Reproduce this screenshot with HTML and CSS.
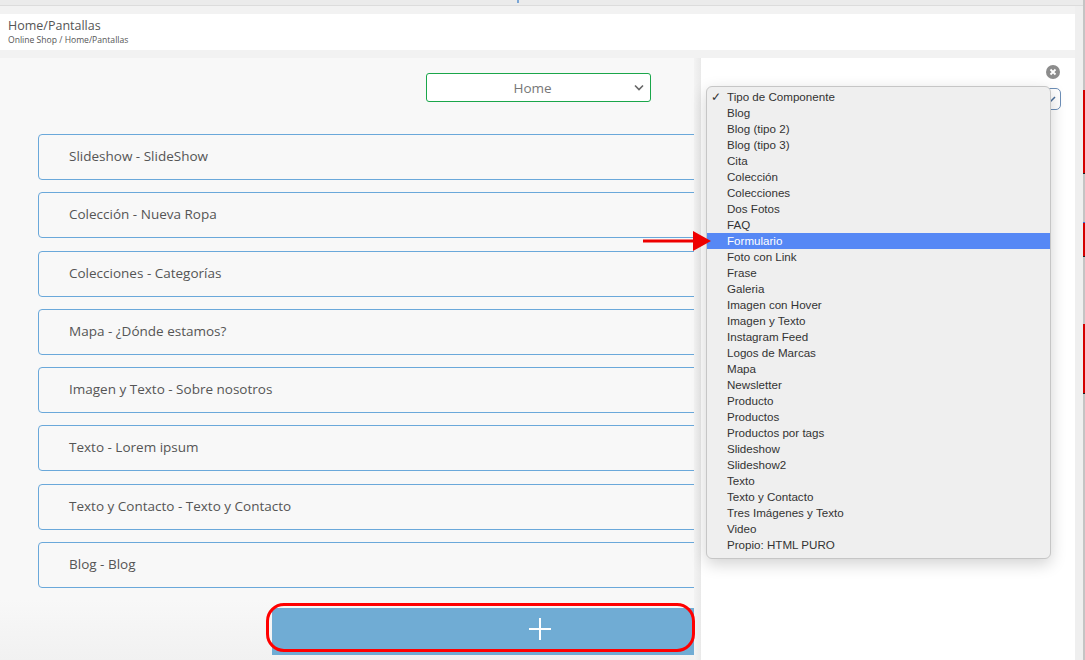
FILE: index.html
```html
<!DOCTYPE html>
<html lang="es">
<head>
    <meta charset="UTF-8">
    <meta name="viewport" content="width=device-width, initial-scale=1.0">
    <title>Home/Pantallas</title>
    <link rel="stylesheet" href="styles.css">
</head>
<body>

    <div class="topbar">
        <span class="topbar-mark"></span>
    </div>

    <div class="page-header">
        <div class="page-title">Home/Pantallas</div>
        <div class="breadcrumb">Online Shop / Home/Pantallas</div>
    </div>

    <div class="main">
        <div class="left-panel">
            <div class="screen-row">
                <div class="screen-select">
                    <span>Home</span>
                    <svg class="chevron" width="10" height="7" viewBox="0 0 10 7"><path d="M1 1.5 L5 5.5 L9 1.5" fill="none" stroke="#666" stroke-width="1.6"/></svg>
                </div>
            </div>

            <div class="component-list">
                <div class="component">Slideshow - SlideShow</div>
                <div class="component">Colección - Nueva Ropa</div>
                <div class="component">Colecciones - Categorías</div>
                <div class="component">Mapa - ¿Dónde estamos?</div>
                <div class="component">Imagen y Texto - Sobre nosotros</div>
                <div class="component">Texto - Lorem ipsum</div>
                <div class="component">Texto y Contacto - Texto y Contacto</div>
                <div class="component">Blog - Blog</div>
            </div>

            <div class="add-wrap">
                <div class="add-clip">
                    <button class="add-button">
                        <svg width="24" height="24" viewBox="0 0 24 24"><path d="M12 1 V23 M1 12 H23" stroke="#fff" stroke-width="2"/></svg>
                    </button>
                </div>
                <div class="add-highlight"></div>
            </div>

            <svg class="red-arrow" width="75" height="24" viewBox="0 0 75 24">
                <rect x="3" y="9.5" width="54" height="3" fill="#ee0000"/>
                <polygon points="53,1 71,11 53,21" fill="#ee0000"/>
            </svg>
        </div>

        <div class="divider"></div>

        <div class="right-panel">
            <span class="close-icon">
                <svg width="14" height="14" viewBox="0 0 14 14"><circle cx="7" cy="7" r="7" fill="#8c8c8c"/><path d="M4.5 4.5 L9.5 9.5 M9.5 4.5 L4.5 9.5" stroke="#fff" stroke-width="1.8"/></svg>
            </span>
            <div class="type-select">
                <svg class="type-chevron" width="8" height="6" viewBox="0 0 8 6"><path d="M1 3 L3 5 L7 1" fill="none" stroke="#4a6e9a" stroke-width="1.5"/></svg>
            </div>

            <ul class="dropdown">
                <li class="checked">Tipo de Componente</li>
                <li>Blog</li>
                <li>Blog (tipo 2)</li>
                <li>Blog (tipo 3)</li>
                <li>Cita</li>
                <li>Colección</li>
                <li>Colecciones</li>
                <li>Dos Fotos</li>
                <li>FAQ</li>
                <li class="active">Formulario</li>
                <li>Foto con Link</li>
                <li>Frase</li>
                <li>Galeria</li>
                <li>Imagen con Hover</li>
                <li>Imagen y Texto</li>
                <li>Instagram Feed</li>
                <li>Logos de Marcas</li>
                <li>Mapa</li>
                <li>Newsletter</li>
                <li>Producto</li>
                <li>Productos</li>
                <li>Productos por tags</li>
                <li>Slideshow</li>
                <li>Slideshow2</li>
                <li>Texto</li>
                <li>Texto y Contacto</li>
                <li>Tres Imágenes y Texto</li>
                <li>Video</li>
                <li>Propio: HTML PURO</li>
            </ul>
        </div>

        <div class="edge">
            <div class="edge-strip">
                <div class="edge-red edge-a"></div>
                <div class="edge-red edge-b"></div>
                <div class="edge-red edge-c"></div>
            </div>
        </div>
    </div>

</body>
</html>
```

FILE: styles.css
```css
body {
    margin: 0;
    background-color: #f2f2f2;
    font-family: 'Open Sans', sans-serif;
    color: #555;
    height: 660px;
    overflow: hidden;
}

.topbar {
    height: 5px;
    background-color: #ebebeb;
    border-bottom: 1px solid #dcdcdc;
    position: relative;
}

.topbar-mark {
    position: absolute;
    left: 517px;
    top: 0;
    width: 2px;
    height: 3px;
    background-color: #7aa6d6;
}

.page-header {
    background-color: #fff;
    height: 36px;
    margin-top: 8px;
    padding-left: 8px;
    box-sizing: border-box;
    width: 1076px;
}

.page-title {
    font-size: 12.5px;
    color: #555;
    padding-top: 3px;
    line-height: 17px;
}

.breadcrumb {
    font-size: 8.6px;
    color: #555;
    line-height: 12px;
    margin-top: 0;
}

.main {
    display: flex;
    margin-top: 8px;
    height: 602px;
}

.left-panel {
    position: relative;
    width: 694px;
    background: linear-gradient(#f8f8f8 90%, #f1f1f1);
    padding-top: 15px;
    box-sizing: border-box;
}

.screen-row {
    display: flex;
    justify-content: flex-end;
    padding-right: 43px;
}

.screen-select {
    position: relative;
    width: 225px;
    height: 29px;
    box-sizing: border-box;
    border: 1px solid #1aa64a;
    border-radius: 3px;
    background-color: #fff;
    display: flex;
    align-items: center;
    justify-content: center;
    padding-right: 12px;
    font-size: 13.5px;
    color: #777;
}

.chevron {
    position: absolute;
    right: 6px;
    top: 10px;
}

.component-list {
    margin-top: 32px;
    padding-left: 38px;
    overflow: hidden;
    display: flex;
    flex-direction: column;
    gap: 12.3px;
}

.component {
    width: 680px;
    height: 46px;
    flex-shrink: 0;
    box-sizing: border-box;
    border: 1px solid #6aa8da;
    border-radius: 4px;
    padding-left: 30px;
    padding-bottom: 2px;
    display: flex;
    align-items: center;
    font-size: 13.5px;
    color: #555;
}

.add-wrap {
    position: relative;
    margin-top: 20px;
    margin-left: 272px;
    width: 422px;
}

.add-clip {
    width: 422px;
    overflow: hidden;
}

.add-button {
    display: flex;
    align-items: center;
    justify-content: center;
    width: 536px;
    height: 47px;
    border: none;
    background-color: #70acd4;
    padding: 0 0 6px;
}

.add-highlight {
    position: absolute;
    left: -6px;
    top: -5px;
    width: 429px;
    height: 49px;
    box-sizing: border-box;
    border: 3px solid #ff0000;
    border-radius: 18px;
}

.red-arrow {
    position: absolute;
    left: 640px;
    top: 172px;
    z-index: 3;
}

.divider {
    width: 7px;
    background: linear-gradient(to right, #f3f3f3, #e9e9e9);
}

.right-panel {
    position: relative;
    width: 375px;
    background-color: #fff;
    padding: 30px 14px 0 11px;
    box-sizing: border-box;
}

.close-icon {
    position: absolute;
    left: 345px;
    top: 7px;
    line-height: 0;
}

.type-select {
    position: relative;
    height: 22px;
    border: 1px solid #6d8fb8;
    border-radius: 5px;
    box-sizing: border-box;
}

.type-chevron {
    position: absolute;
    right: 4px;
    top: 7px;
}

.dropdown {
    position: absolute;
    left: 5px;
    top: 28px;
    width: 345px;
    margin: 0;
    padding: 2px 0 5px;
    list-style: none;
    background-color: #efefef;
    border: 1px solid #c6c6c6;
    border-radius: 6px;
    box-sizing: border-box;
    box-shadow: 0 5px 16px rgba(0, 0, 0, 0.18);
    font-family: 'Liberation Sans', Arial, sans-serif;
    font-size: 11.6px;
    color: #333;
    z-index: 2;
}

.dropdown li {
    position: relative;
    height: 16px;
    line-height: 16px;
    padding-left: 20px;
}

.dropdown li.checked::before {
    content: "\2713";
    position: absolute;
    left: 4px;
    font-size: 12px;
}

.dropdown li.active {
    background-color: #5688f5;
    color: #fff;
}

.edge {
    width: 10px;
    background-color: #efefef;
    display: flex;
    justify-content: flex-end;
    margin-top: -58px;
}

.edge-strip {
    position: relative;
    width: 2px;
    background-color: #c4c4c4;
}

.edge-red {
    position: absolute;
    left: 0;
    width: 2px;
    background-color: #d40000;
    border-bottom: 1px solid #222;
}

.edge-a {
    top: 90px;
    height: 83px;
}

.edge-b {
    top: 222px;
    height: 33px;
    border-top: 1px solid #3a6fd8;
}

.edge-c {
    top: 324px;
    height: 69px;
}
```
